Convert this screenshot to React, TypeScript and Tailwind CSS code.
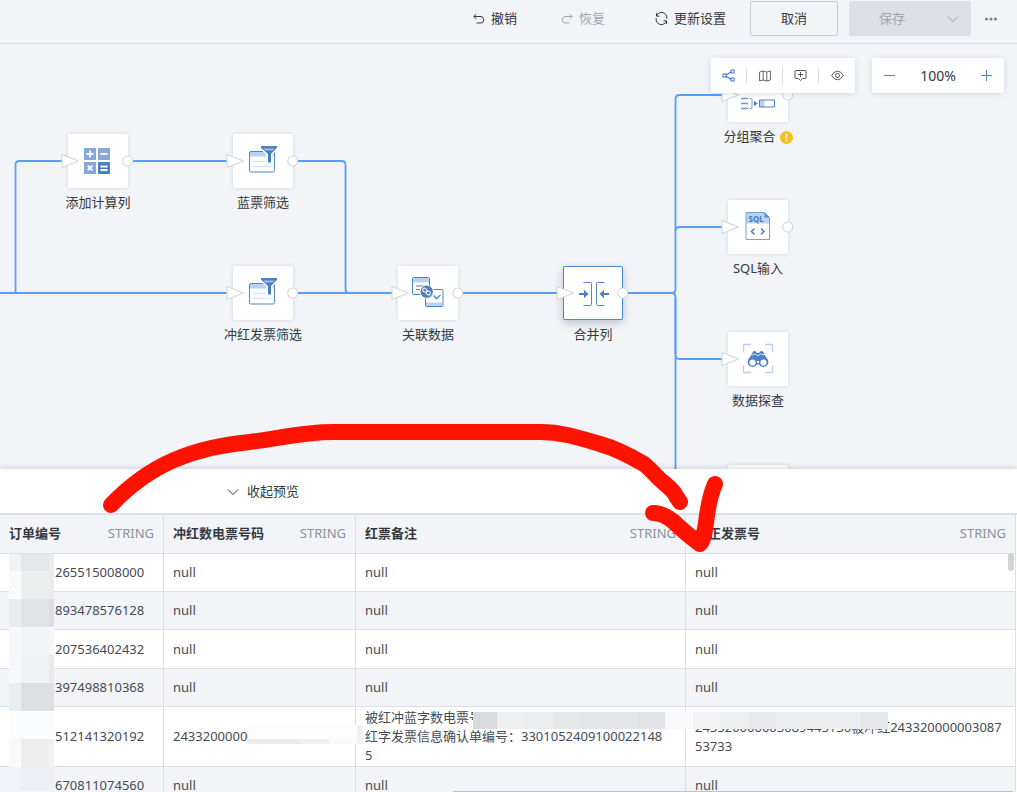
import type { ReactNode } from 'react'

// ─── Data ─────────────────────────────────────────────────────────────────────
type FlowNode = {
  id: string
  x: number
  y: number
  label?: string
  icon?: ReactNode
  selected?: boolean
  warning?: boolean
  noOutput?: boolean
}

const NODES: FlowNode[] = [
  { id: 'calc', x: 68, y: 90, label: '添加计算列', icon: <CalcIcon /> },
  { id: 'blue', x: 233, y: 90, label: '蓝票筛选', icon: <FilterIcon /> },
  { id: 'red', x: 233, y: 222, label: '冲红发票筛选', icon: <FilterIcon /> },
  { id: 'join', x: 398, y: 222, label: '关联数据', icon: <JoinIcon /> },
  { id: 'merge', x: 563, y: 222, label: '合并列', icon: <MergeIcon />, selected: true },
  { id: 'group', x: 728, y: 24, label: '分组聚合', icon: <GroupIcon />, warning: true },
  { id: 'sql', x: 728, y: 156, label: 'SQL输入', icon: <SqlIcon /> },
  { id: 'explore', x: 728, y: 288, label: '数据探查', icon: <ExploreIcon />, noOutput: true },
  { id: 'next', x: 728, y: 421 },
]

const EDGES = [
  'M0 249H230',
  'M15.5 249V121Q15.5 117 19.5 117H65',
  'M130 117H230',
  'M295 117H341.5Q345.5 117 345.5 121V245Q345.5 249 349.5 249',
  'M295 249H395',
  'M460 249H560',
  'M625 249H671.5Q675.5 249 675.5 245V55Q675.5 51 679.5 51H725',
  'M675.5 187Q675.5 183 679.5 183H725',
  'M671.5 249Q675.5 249 675.5 253V311Q675.5 315 679.5 315H725',
  'M675.5 253V430',
]

const COLUMNS = ['订单编号', '冲红数电票号码', '红票备注', '修正发票号']

const ROWS: string[][] = [
  ['265515008000', 'null', 'null', 'null'],
  ['893478576128', 'null', 'null', 'null'],
  ['207536402432', 'null', 'null', 'null'],
  ['397498810368', 'null', 'null', 'null'],
  [
    '512141320192',
    '24332000000',
    '被红冲蓝字数电票号码\n红字发票信息确认单编号：3301052409100022148\n5',
    '243320000003089445130被冲红243320000003087\n53733',
  ],
  ['670811074560', 'null', 'null', 'null'],
]

// x, y, width, height, colour
const MOSAIC: [number, number, number, number, string][] = [
  [9, 554, 12, 17, '#f1f2f7'], [21, 554, 28, 17, '#e6e7eb'], [49, 554, 5, 17, '#ebecef'],
  [9, 571, 12, 28, '#fafafa'], [21, 571, 28, 28, '#edefee'], [49, 571, 5, 28, '#ececed'],
  [9, 599, 12, 28, '#ebecf0'], [21, 599, 28, 28, '#e3e4e8'], [49, 599, 5, 28, '#dcdde1'],
  [9, 627, 12, 28, '#f6f7fa'], [21, 627, 28, 28, '#f3f4f6'], [49, 627, 5, 28, '#f6f7f9'],
  [9, 655, 12, 28, '#f7f8fb'], [21, 655, 28, 28, '#f1f2f4'], [49, 655, 5, 28, '#e9eaec'],
  [9, 683, 12, 28, '#e9edf4'], [21, 683, 33, 28, '#dddfe3'],
  [9, 711, 12, 28, '#fcfdfe'], [21, 711, 33, 28, '#fbfcfe'],
  [9, 739, 12, 28, '#f9f9fa'], [21, 739, 28, 28, '#ededee'], [49, 739, 5, 28, '#f1f1f2'],
  [9, 767, 12, 25, '#f2f3f8'], [21, 767, 33, 23, '#eeeff4'],
  [248, 725, 109, 14, '#fcfdfd'], [248, 739, 25, 5, '#ebebeb'], [273, 739, 28, 5, '#eaebea'],
  [301, 739, 28, 5, '#f0f1f0'], [329, 739, 28, 5, '#fafafb'], [357, 725, 6, 19, '#f1f1f4'],
  [473, 712, 24, 17, '#d9dadd'], [497, 712, 28, 17, '#eeeff1'], [525, 712, 28, 17, '#ebecee'],
  [553, 712, 28, 17, '#e6e7e9'], [581, 712, 56, 17, '#e4e5e8'], [637, 712, 28, 17, '#e2e3e6'],
  [665, 712, 28, 17, '#f8f8fa'], [693, 712, 28, 17, '#f3f3f5'], [721, 712, 28, 17, '#eeeff1'],
  [749, 712, 28, 17, '#e8e9ec'], [777, 712, 56, 17, '#ebecee'], [833, 712, 28, 17, '#edeef0'],
  [861, 712, 27, 17, '#e6e7e9'],
]

export default function App() {
  return (
    <div className="relative flex h-screen flex-col overflow-hidden bg-[#f2f4f8] font-['Noto_Sans','Noto_Sans_CJK_SC',sans-serif] text-[13px] text-[#343941]">
      <TopBar />
      <Canvas />
      <Preview />
      <Annotation />
    </div>
  )
}

// ─── Top bar ──────────────────────────────────────────────────────────────────
function TopBar() {
  return (
    <header className="flex h-11 shrink-0 items-center justify-end border-b border-[#d9dde4] pr-[19px] pb-1.5">
      <button className="flex items-center gap-1.5">
        <UndoIcon />
        撤销
      </button>
      <button className="ml-11 flex items-center gap-1.5 text-[#a3a9b2]" disabled>
        <span className="-scale-x-100"><UndoIcon /></span>
        恢复
      </button>
      <button className="ml-[50px] flex items-center gap-1.5">
        <RefreshIcon />
        更新设置
      </button>
      <button className="ml-6 h-[35px] w-[88px] rounded-xs border border-[#c7cdd6]">取消</button>
      <button
        className="ml-[11px] flex h-[35px] w-[122px] items-center justify-between rounded-xs bg-[#dde0e4] pr-3 pl-[30px] text-[#9ea5ae]"
        disabled
      >
        保存
        <ChevronDown />
      </button>
      <button className="ml-[13px]" aria-label="更多">
        <svg width="14" height="4" viewBox="0 0 14 4" fill="#7b828c">
          <circle cx="2.5" cy="2" r="1.6" />
          <circle cx="7" cy="2" r="1.6" />
          <circle cx="11.5" cy="2" r="1.6" />
        </svg>
      </button>
    </header>
  )
}

// ─── Flow canvas ──────────────────────────────────────────────────────────────
function Canvas() {
  return (
    <main className="relative h-[425px] shrink-0 overflow-hidden">
      <svg className="absolute inset-0 h-full w-full" fill="none" stroke="#559ff8" strokeWidth="1.8">
        {EDGES.map((d) => <path key={d} d={d} />)}
      </svg>

      {NODES.map((node) => <NodeCard key={node.id} node={node} />)}

      <div className="absolute top-3.5 right-[13px] flex gap-[17px]">
        <div className="flex h-[35px] items-center divide-x divide-[#dcdfe5] rounded-xs bg-white shadow-[0_1px_6px_rgba(30,45,75,0.14)]">
          <ToolButton label="布局"><ShareIcon /></ToolButton>
          <ToolButton label="缩略图"><MapIcon /></ToolButton>
          <ToolButton label="备注"><CommentIcon /></ToolButton>
          <ToolButton label="预览"><EyeIcon /></ToolButton>
        </div>
        <div className="flex h-[35px] w-[132px] items-center justify-between rounded-xs bg-white px-3 shadow-[0_1px_6px_rgba(30,45,75,0.14)]">
          <button aria-label="缩小">
            <svg width="11" height="11" stroke="#717b89"><path d="M0 5.5H11" /></svg>
          </button>
          <span className="text-sm">100%</span>
          <button aria-label="放大">
            <svg width="11" height="11" stroke="#5d88a5"><path d="M0 5.5H11M5.5 0V11" /></svg>
          </button>
        </div>
      </div>
    </main>
  )
}

function ToolButton({ label, children }: { label: string; children: ReactNode }) {
  return (
    <button aria-label={label} className="flex h-[17px] w-9 items-center justify-center">
      {children}
    </button>
  )
}

function NodeCard({ node }: { node: FlowNode }) {
  return (
    <div className="absolute flex w-[60px] flex-col items-center gap-[5px]" style={{ left: node.x, top: node.y }}>
      <div
        className={`h-[54px] w-[60px] rounded-xs bg-white ${
          node.selected
            ? 'shadow-[inset_0_0_0_1px_#4c86d4,0_3px_8px_rgba(30,45,75,0.25)]'
            : 'shadow-[0_0_4px_rgba(30,45,75,0.14)]'
        }`}
      >
        <svg width="60" height="54" viewBox="0 0 60 54" className="overflow-visible" fill="none">
          {node.icon}
          {node.label && (
            <path d="M-6 20.5L10.5 27L-6 33.5Z" fill="#fff" stroke="#d3d7dd" strokeWidth="1.1" />
          )}
          {node.label && !node.noOutput && (
            <circle cx="59.7" cy="27" r="5" fill="#fff" stroke="#d3d7dd" strokeWidth="1.1" />
          )}
        </svg>
      </div>
      {node.label && (
        <div className="flex h-5 items-center gap-1 whitespace-nowrap">
          {node.label}
          {node.warning && (
            <svg width="13" height="13" viewBox="0 0 13 13">
              <circle cx="6.5" cy="6.5" r="6.5" fill="#f3c01c" />
              <path d="M6.5 2.8V7.3M6.5 8.7V10.2" stroke="#fff" strokeWidth="1.5" />
            </svg>
          )}
        </div>
      )}
    </div>
  )
}

// ─── Preview table ────────────────────────────────────────────────────────────
function rowHeight(row: string[], index: number) {
  if (row[1] !== 'null') return 'h-[60px]'
  return index === 2 ? 'h-[39px]' : 'h-[38px]'
}

function Preview() {
  return (
    <section className="relative min-h-0 flex-1 overflow-hidden bg-white shadow-[0_-1px_6px_rgba(30,45,75,0.18)]">
      <div className="flex h-[46px] items-center border-b-2 border-[#dcdfe5] pt-0.5 pl-[227px]">
        <button className="flex items-center gap-2">
          <ChevronDown />
          收起预览
        </button>
      </div>

      <div className="pr-px">
        <table className="w-full table-fixed border-separate border-spacing-0">
          <colgroup>
            <col className="w-[164px]" />
            <col className="w-[192px]" />
            <col className="w-[330px]" />
            <col />
          </colgroup>
          <thead>
            <tr className="h-[39px] bg-[#f2f4f8]">
              {COLUMNS.map((name) => (
                <th key={name} className="border-r border-b border-[#dcdfe5] px-[9px] py-0">
                  <div className="flex items-center justify-between">
                    <span className="font-semibold">{name}</span>
                    <span className="font-normal text-[#8b929c]">STRING</span>
                  </div>
                </th>
              ))}
            </tr>
          </thead>
          <tbody>
            {ROWS.map((row, index) => (
              <tr key={row[0]} className={`odd:bg-white even:bg-[#f2f4f8] ${rowHeight(row, index)}`}>
                {row.map((cell, i) => (
                  <td
                    key={i}
                    className={`border-r border-b border-[#dcdfe5] py-0 pr-0 leading-[19px] whitespace-pre text-[#464b53] ${
                      i === 0 ? 'pl-[55px]' : 'pl-[9px]'
                    }`}
                  >
                    {cell}
                  </td>
                ))}
              </tr>
            ))}
          </tbody>
        </table>
      </div>

      {/* Scrollbars */}
      <div className="absolute top-[84px] right-[3px] h-[18px] w-1.5 rounded-full bg-[#d2d4d4]" />
      <div className="absolute right-1 bottom-0 left-[453px] h-px bg-[#bfc2c8]" />
    </section>
  )
}

// Redaction blocks and the hand-drawn arrow
function Annotation() {
  return (
    <svg className="pointer-events-none absolute top-0 left-0" width="1017" height="792" viewBox="0 0 1017 792" fill="none">
      {MOSAIC.map(([x, y, w, h, fill]) => (
        <rect key={`${x}-${y}`} x={x} y={y} width={w} height={h} fill={fill} shapeRendering="crispEdges" />
      ))}
      <g stroke="#ff1200" strokeWidth="16" strokeLinecap="round" strokeLinejoin="round">
        <path d="M111 505C131 484 151 470 174 460C200 449 222 445 250 442C281 438 304 432 334 432H540C562 432 580 438 600 444C618 449 632 457 644 464C653 471 656 477 664 483C670 488 674 491 676 496L680 502" />
        <path d="M653 513C661 513 668 517 674 522C682 530 692 538 700 544C708 535 704 508 715 484" />
      </g>
    </svg>
  )
}

// ─── Toolbar icons ────────────────────────────────────────────────────────────
function UndoIcon() {
  return (
    <svg width="12" height="12" viewBox="0 0 12 12" fill="none" stroke="currentColor">
      <path d="M3.5 .8L.8 3.5L3.5 6.2M1 3.5H8A3.3 3.3 0 0 1 8 10H3.5" />
    </svg>
  )
}

function RefreshIcon() {
  return (
    <svg width="13" height="13" viewBox="0 0 13 13" fill="none" stroke="currentColor">
      <path d="M1.5 1.2V4.2H4.5M1.6 4A5.3 5.3 0 0 1 11.8 6.8M11.5 11.8V8.8H8.5M11.4 9A5.3 5.3 0 0 1 1.2 6.2" />
    </svg>
  )
}

function ChevronDown() {
  return (
    <svg width="12" height="8" viewBox="0 0 12 8" fill="none" stroke="currentColor">
      <path d="M1 1.5L6 6.5L11 1.5" />
    </svg>
  )
}

function ShareIcon() {
  return (
    <svg width="13" height="13" viewBox="0 0 13 13" fill="none" stroke="#3c78d8" strokeWidth="1.1">
      <path d="M1 5H4V8H1ZM9 1H12V4H9ZM9 9H12V12H9ZM4 6L9 3M4 7.2L9 10.2" />
    </svg>
  )
}

function MapIcon() {
  return (
    <svg width="12" height="12" viewBox="0 0 12 12" fill="none" stroke="#4e565f" strokeWidth=".9">
      <path d="M.6 2L4.2 1L7.8 2L11.4 1V10L7.8 11L4.2 10L.6 11ZM4.2 1V10M7.8 2V11" />
    </svg>
  )
}

function CommentIcon() {
  return (
    <svg width="13" height="13" viewBox="0 0 13 13" fill="none" stroke="#4e565f">
      <path d="M1.5 1.5H11.5Q12 1.5 12 2V9Q12 9.5 11.5 9.5H8.5L6.5 11.5L4.5 9.5H1.5Q1 9.5 1 9V2Q1 1.5 1.5 1.5ZM4 5.5H9M6.5 3V8" />
    </svg>
  )
}

function EyeIcon() {
  return (
    <svg width="13" height="11" viewBox="0 0 13 11" fill="none" stroke="#4e565f">
      <path d="M.7 5.5Q3 1.2 6.5 1.2T12.3 5.5Q10 9.8 6.5 9.8T.7 5.5Z" />
      <circle cx="6.5" cy="5.5" r="2" />
    </svg>
  )
}

// ─── Node icons, drawn in the 60×54 card ──────────────────────────────────────
function CalcIcon() {
  return (
    <g>
      <path d="M16 14H28V26H16ZM30 14H42V26H30ZM16 28H28V40H16Z" fill="#87a8d6" />
      <path d="M30 28H42V40H30Z" fill="#4b81c3" />
      <path d="M18.5 20H25.5M22 16.5V23.5M32.5 20H39.5M19.7 31.7L24.3 36.3M24.3 31.7L19.7 36.3M32.5 32.5H39.5M32.5 36H39.5" stroke="#fff" strokeWidth="1.8" />
    </g>
  )
}

function FilterIcon() {
  return (
    <g>
      <rect x="16.5" y="17.5" width="25" height="20.5" rx="1.5" fill="#fafcff" />
      <path d="M17 18H41V22.5H17Z" fill="#b9d2f2" />
      <path d="M19.5 27.5H38M19.5 32.5H38" stroke="#d5e3f6" />
      <rect x="16.5" y="17.5" width="25" height="20.5" rx="1.5" stroke="#5585c4" />
      <path d="M28 12H44V14L38.5 20V29H34V20L28 14Z" fill="#4b81c3" stroke="#fff" strokeWidth="2" />
      <path d="M28 12H44V13.8L38 20V28.5H35V20L28 13.8Z" fill="#4b81c3" />
      <path d="M30.5 14.5H41.5L39.7 16.5H32.3Z" fill="#9fc0ea" />
    </g>
  )
}

function JoinIcon() {
  return (
    <g stroke="#4b81c3">
      <rect x="14.5" y="11.5" width="17" height="17" rx="1" fill="#fff" />
      <path d="M15 12H31V16.5H15Z" fill="#b9d2f2" stroke="none" />
      <path d="M18 20H26M18 23.5H22" />
      <rect x="27.5" y="23.5" width="17.5" height="17" rx="1" fill="#fff" />
      <path d="M28 36.5H44.5V40H28Z" fill="#b9d2f2" stroke="none" />
      <path d="M35.5 29.5L38.5 32.5L42.5 29" strokeWidth="1.3" />
      <circle cx="28.7" cy="25.7" r="6.7" fill="#4b81c3" stroke="#fff" />
      <rect x="24.7" y="22.5" width="4" height="3.4" rx="1.4" stroke="#fff" transform="rotate(35 26.7 24.2)" />
      <rect x="28.4" y="25.3" width="4" height="3.4" rx="1.4" stroke="#fff" transform="rotate(35 30.4 27)" />
    </g>
  )
}

function MergeIcon() {
  return (
    <g>
      <path d="M20.5 16.5H27.5Q28.5 16.5 28.5 17.5V38.5Q28.5 39.5 27.5 39.5H20.5M41.5 16.5H34.5Q33.5 16.5 33.5 17.5V38.5Q33.5 39.5 34.5 39.5H41.5" stroke="#5585c4" />
      <path d="M16 27H21V23.7L25.5 28L21 32.3V29H16ZM46 27H41V23.7L36.5 28L41 32.3V29H46Z" fill="#4b81c3" />
    </g>
  )
}

function GroupIcon() {
  return (
    <g stroke="#6f9bd3">
      <path d="M13 30.5H20M13 35.5H20M13 40.5H20" strokeWidth="1.5" />
      <path d="M21.5 30.5H23Q24 30.5 24 31.5V39.5Q24 40.5 23 40.5H21.5" />
      <path d="M26 32.7L29.7 35.5L26 38.3Z" fill="#4b81c3" stroke="none" />
      <path d="M31.5 32H36.5V39H31.5Z" fill="#b9d2f2" stroke="none" />
      <path d="M31.5 32H46.5V39H31.5Z" stroke="#4b81c3" />
    </g>
  )
}

function SqlIcon() {
  return (
    <g>
      <path d="M18 12.5H36.5L41.5 17.5V39.5H18Z" fill="#fff" />
      <path d="M18 12.5H36.5L41.5 17.5V23.5H18Z" fill="#b9d2f2" />
      <path d="M18 12.5H36.5L41.5 17.5V39.5H18Z" stroke="#7ba2d6" />
      <path d="M36.5 12.5V17.5H41.5Z" fill="#5b8bc9" />
      <text x="20.5" y="22" className="text-[8px] font-bold" fill="#4478bb">SQL</text>
      <path d="M26.5 28.5L23.5 31.5L26.5 34.5M33 28.5L36 31.5L33 34.5" stroke="#4b81c3" strokeWidth="1.5" />
    </g>
  )
}

function ExploreIcon() {
  return (
    <g>
      <path d="M15.5 20V13.5Q15.5 12.5 16.5 12.5H23M37 12.5H43.5Q44.5 12.5 44.5 13.5V20M44.5 33.5V39.5Q44.5 40.5 43.5 40.5H37M23 40.5H16.5Q15.5 40.5 15.5 39.5V33.5" stroke="#b4cff2" strokeWidth="1.3" />
      <path d="M25 19.5Q26.5 18.5 28 19.5L29 21H31L32 19.5Q33.5 18.5 35 19.5L36.2 22.3L39.5 27.5A4.8 4.8 0 0 1 31.5 32.5H28.5A4.8 4.8 0 0 1 20.5 27.5L23.8 22.3Z" fill="#4b81c3" />
      <circle cx="24.5" cy="30.2" r="4.8" fill="#4b81c3" />
      <circle cx="35.5" cy="30.2" r="4.8" fill="#4b81c3" />
      <circle cx="24.5" cy="30.5" r="3.1" fill="#fff" />
      <circle cx="35.5" cy="30.5" r="3.1" fill="#fff" />
      <circle cx="30" cy="30" r="1.2" fill="#fff" />
      <path d="M24 23L27.5 22L30 24L32.5 22L36 23" stroke="#dbe8f8" />
    </g>
  )
}
